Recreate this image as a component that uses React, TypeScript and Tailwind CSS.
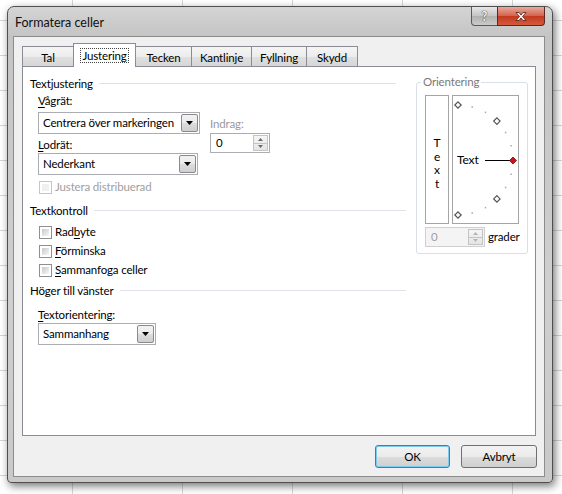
import React from "react";

const btnGrad =
  "bg-[linear-gradient(to_bottom,#f2f2f2_0%,#ebebeb_50%,#dddddd_50%,#cfcfcf_100%)]";

function Ul({ children }: { children: React.ReactNode }) {
  return <span className="underline decoration-1 underline-offset-2">{children}</span>;
}

function DownArrow() {
  return (
    <svg width="7" height="4" viewBox="0 0 7 4">
      <path d="M0 0h7L3.5 4z" fill="#000" />
    </svg>
  );
}

function Select({ value, width }: { value: string; width: string }) {
  return (
    <div className={`flex h-[22px] border border-[#abadb3] bg-white ${width}`}>
      <span className="flex-1 overflow-hidden whitespace-nowrap pl-[4px] leading-[20px]">{value}</span>
      <span
        className={`m-px flex w-[17px] shrink-0 items-center justify-center rounded-[2px] border border-[#8a8a8a] ${btnGrad}`}
      >
        <DownArrow />
      </span>
    </div>
  );
}

function Spin({ disabled }: { disabled?: boolean }) {
  const box = disabled
    ? "border-[#cfcfcf] bg-[#f4f4f4] text-[#a0a0a0]"
    : "border-[#abadb3] bg-white text-black";
  const arrow = disabled ? "#b5b5b5" : "#6a6a6a";
  return (
    <div className={`flex h-[20px] w-[60px] border ${box}`}>
      <span className="flex-1 pl-[5px] leading-[18px]">0</span>
      <span className="m-px flex w-[15px] flex-col border border-[#c4c4c4] bg-[linear-gradient(to_bottom,#f6f6f6,#e4e4e4)]">
        <span className="flex flex-1 items-center justify-center border-b border-[#c4c4c4]">
          <svg width="5" height="3" viewBox="0 0 5 3">
            <path d="M0 3h5L2.5 0z" fill={arrow} />
          </svg>
        </span>
        <span className="flex flex-1 items-center justify-center">
          <svg width="5" height="3" viewBox="0 0 5 3">
            <path d="M0 0h5L2.5 3z" fill={arrow} />
          </svg>
        </span>
      </span>
    </div>
  );
}

function Check({ children, disabled }: { children: React.ReactNode; disabled?: boolean }) {
  return (
    <div className="ml-[9px] flex h-[16px] items-center gap-[3px]">
      <span
        className={`h-[13px] w-[13px] border bg-white p-[2px] ${
          disabled ? "border-[#c5c5c5]" : "border-[#8e8f8f]"
        }`}
      >
        <span
          className={`block h-full w-full ${
            disabled
              ? "bg-[#f0f0f0]"
              : "bg-[linear-gradient(135deg,#c9c9c9,#f7f7f7)]"
          }`}
        />
      </span>
      <span className={disabled ? "text-[#a0a0a0]" : "text-black"}>{children}</span>
    </div>
  );
}

function Heading({ children, short }: { children: React.ReactNode; short?: boolean }) {
  return (
    <div className={`flex h-[17px] items-center ${short ? "mr-[10px]" : ""}`}>
      <span>{children}</span>
      <span className="ml-[6px] h-px flex-1 bg-[#dfe3e8]" />
    </div>
  );
}

function Orientation() {
  const cx = 5;
  const cy = 64;
  const r = 55;
  const pt = (deg: number) => {
    const a = (deg * Math.PI) / 180;
    return [cx + r * Math.cos(a), cy - r * Math.sin(a)];
  };
  const dots = [75, 60, 30, 15, -15, -30, -60, -75];
  const diamonds = [90, 45, -45, -90];
  const dia = (x: number, y: number, s: number) =>
    `M${x} ${y - s}L${x + s} ${y}L${x} ${y + s}L${x - s} ${y}Z`;
  return (
    <div className="relative h-[129px] w-[67px] border border-[#a5a5a5] bg-white">
      <svg className="absolute inset-0" width="65" height="127" viewBox="0 0 65 127">
        {dots.map((d) => {
          const [x, y] = pt(d);
          return <rect key={d} x={x - 0.75} y={y - 0.75} width="1.5" height="1.5" fill="#a8a8a8" />;
        })}
        {diamonds.map((d) => {
          const [x, y] = pt(d);
          return <path key={d} d={dia(x, y, 3.2)} fill="#fff" stroke="#555" strokeWidth="1.2" />;
        })}
        <line x1="32" y1="64.5" x2="58" y2="64.5" stroke="#000" strokeWidth="1" />
        <path d={dia(60, 64.5, 3.5)} fill="#c8141e" stroke="#7a0d12" strokeWidth="0.8" />
      </svg>
      <span className="absolute left-[4px] top-[56px] text-[12px] leading-[16px]">Text</span>
    </div>
  );
}

function Tab({ label, selected, w }: { label: string; selected?: boolean; w: string }) {
  if (selected) {
    return (
      <div
        className={`relative z-10 -mb-px -ml-px flex h-[24px] items-center justify-center border border-b-0 border-[#898c95] bg-white ${w}`}
      >
        <span className="border border-dotted border-[#444] px-[1px] leading-[13px]">{label}</span>
      </div>
    );
  }
  return (
    <div
      className={`-ml-px flex h-[20px] items-center justify-center border border-b-0 border-[#898c95] pt-[2px] bg-[linear-gradient(to_bottom,#f5f5f5_0%,#ececec_50%,#e0e0e0_50%,#d6d6d6_100%)] first:ml-0 ${w}`}
    >
      {label}
    </div>
  );
}

export default function App() {
  return (
    <div className="relative h-[494px] w-[562px] overflow-hidden bg-white bg-[linear-gradient(to_right,#d6d6d6_1px,transparent_1px),linear-gradient(to_bottom,#d6d6d6_1px,transparent_1px)] bg-[size:110px_35px] bg-[position:72px_20px] font-[family-name:Lato,sans-serif] text-[11.5px] leading-[16px] tracking-[-0.15px] text-black">
      <div className="absolute left-[7px] top-[6px] flex h-[477px] w-[546px] flex-col rounded-t-[7px] rounded-b-[4px] border border-[#4f4f4f] bg-[linear-gradient(to_bottom,#d4d4d4,#c4c4c4_30px,#cfcfcf_60%,#c9c9c9)] shadow-[2px_3px_8px_rgba(0,0,0,0.55)]">
        <div className="flex h-[29px]">
          <span className="pl-[7px] pt-[8px] text-[12.5px] leading-[16px] tracking-normal text-[#111]">
            Formatera celler
          </span>
          <div className="mr-[7px] ml-auto flex h-[19px]">
            <div className="flex w-[27px] items-center justify-center rounded-bl-[4px] border border-t-0 border-[#5a5a5a] bg-[linear-gradient(to_bottom,#e6e6e6,#c4c4c4_50%,#b0b0b0_50%,#cbcbcb)]">
              <span className="text-[13px] font-bold leading-[14px] text-[#f4f4f4] [text-shadow:0_0_1px_#333,0_0_1px_#333]">
                ?
              </span>
            </div>
            <div className="-ml-px flex w-[48px] items-center justify-center rounded-br-[4px] border border-t-0 border-[#5a2a20] bg-[linear-gradient(to_bottom,#e9a99b,#d2624c_50%,#c2381f_50%,#d55a3c)]">
              <svg width="14" height="11" viewBox="0 0 14 11">
                <path
                  d="M2 1.5h3l2 2.6 2-2.6h3l-3.5 4 3.5 4h-3l-2-2.6-2 2.6h-3l3.5-4z"
                  fill="#fff"
                  stroke="#4a1b14"
                  strokeWidth="0.8"
                />
              </svg>
            </div>
          </div>
        </div>

        <div className="ml-[5px] flex h-[441px] w-[532px] flex-col border border-[#8c8c8c] bg-[#f0f0f0] pl-[8px] pt-[6px]">
          <div className="flex h-[23px] items-end">
            <Tab label="Tal" w="w-[52px]" />
            <Tab label="Justering" w="w-[63px]" selected />
            <Tab label="Tecken" w="w-[57px]" />
            <Tab label="Kantlinje" w="w-[61px]" />
            <Tab label="Fyllning" w="w-[56px]" />
            <Tab label="Skydd" w="w-[52px]" />
          </div>

          <div className="flex h-[370px] w-[514px] border border-[#898c95] bg-white">
            <div className="ml-[7px] w-[376px] pt-[8px]">
              <Heading short>Textjustering</Heading>
              <div className="flex">
                <div className="ml-[8px] pt-px">
                  <div className="h-[16px]">
                    <Ul>V</Ul>ågrät:
                  </div>
                  <div className="mt-[3px]">
                    <Select value="Centrera över markeringen" width="w-[162px]" />
                  </div>
                  <div className="mt-[3px] h-[16px]">
                    <Ul>L</Ul>odrät:
                  </div>
                  <Select value="Nederkant" width="w-[160px]" />
                  <div className="-ml-[8px] mt-[4px]">
                    <Check disabled>Justera distribuerad</Check>
                  </div>
                </div>
                <div className="ml-[10px] pt-[24px]">
                  <div className="h-[16px] text-[#9a9a9a]">Indrag:</div>
                  <div className="mt-px">
                    <Spin />
                  </div>
                </div>
              </div>

              <div className="mt-[7px]">
                <Heading>Textkontroll</Heading>
              </div>
              <div className="mt-[5px]">
                <Check>
                  Rad<Ul>b</Ul>yte
                </Check>
              </div>
              <div className="mt-[3px]">
                <Check>
                  <Ul>F</Ul>örminska
                </Check>
              </div>
              <div className="mt-[3px]">
                <Check>
                  <Ul>S</Ul>ammanfoga celler
                </Check>
              </div>

              <div className="mt-[4px]">
                <Heading>Höger till vänster</Heading>
              </div>
              <div className="ml-[8px] mt-[8px] h-[16px]">
                <Ul>T</Ul>extorientering:
              </div>
              <div className="ml-[8px]">
                <Select value="Sammanhang" width="w-[118px]" />
              </div>
            </div>

            <div className="relative ml-[10px] mt-[15px] h-[172px] w-[112px] rounded-[3px] border border-[#d9dfe5] pl-[8px] pt-[12px]">
              <span className="absolute -top-[9px] left-[4px] bg-white px-[2px] text-[#7a7a7a]">
                Orientering
              </span>
              <div className="flex gap-[3px]">
                <div className="flex h-[129px] w-[24px] flex-col items-center justify-center border border-[#a5a5a5] bg-white pt-[7px] text-[12px] leading-[13.5px]">
                  <span>T</span>
                  <span>e</span>
                  <span>x</span>
                  <span>t</span>
                </div>
                <Orientation />
              </div>
              <div className="mt-[3px] flex items-center gap-[3px]">
                <Spin disabled />
                <span>grader</span>
              </div>
            </div>
          </div>

          <div className="mt-[9px] flex justify-end gap-[11px] pr-[7px]">
            <div
              className={`flex h-[23px] w-[75px] items-center justify-center rounded-[3px] border border-[#3c7fb1] shadow-[inset_0_0_0_1px_#7ecbf0] ${btnGrad}`}
            >
              OK
            </div>
            <div
              className={`flex h-[23px] w-[76px] items-center justify-center rounded-[3px] border border-[#707070] ${btnGrad}`}
            >
              Avbryt
            </div>
          </div>
        </div>
      </div>
    </div>
  );
}
